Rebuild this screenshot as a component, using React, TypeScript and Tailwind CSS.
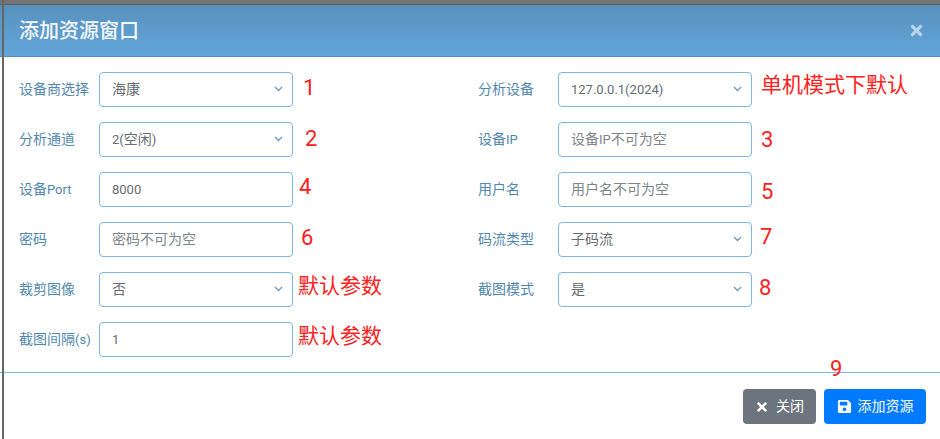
import { FaSave, FaTimes } from 'react-icons/fa';

const cjk = "font-['Roboto','Noto_Sans_CJK_SC',sans-serif]";

interface FieldRow {
  label: string;
  value?: string;
  placeholder?: string;
  select?: boolean;
  note?: string;
  noteClass?: string;
}

const rows: [FieldRow, FieldRow | null][] = [
  [
    { label: '设备商选择', value: '海康', select: true, note: '1', noteClass: 'ml-[10px] text-[22px] -translate-y-[2px]' },
    { label: '分析设备', value: '127.0.0.1(2024)', select: true, note: '单机模式下默认', noteClass: 'ml-[9px] text-[21px] -translate-y-[4px]' },
  ],
  [
    { label: '分析通道', value: '2(空闲)', select: true, note: '2', noteClass: 'ml-[12px] text-[22px] -translate-y-[1px]' },
    { label: '设备IP', placeholder: '设备IP不可为空', note: '3', noteClass: 'ml-[9px] text-[22px]' },
  ],
  [
    { label: '设备Port', value: '8000', note: '4', noteClass: 'ml-[6px] text-[22px] -translate-y-[3px]' },
    { label: '用户名', placeholder: '用户名不可为空', note: '5', noteClass: 'ml-[9px] text-[22px] translate-y-[2px]' },
  ],
  [
    { label: '密码', placeholder: '密码不可为空', note: '6', noteClass: 'ml-[8px] text-[22px] -translate-y-[2px]' },
    { label: '码流类型', value: '子码流', select: true, note: '7', noteClass: 'ml-[8px] text-[22px] -translate-y-[3px]' },
  ],
  [
    { label: '裁剪图像', value: '否', select: true, note: '默认参数', noteClass: 'ml-[5px] text-[21px] -translate-y-[3px]' },
    { label: '截图模式', value: '是', select: true, note: '8', noteClass: 'ml-[7px] text-[22px] -translate-y-[2px]' },
  ],
  [
    { label: '截图间隔(s)', value: '1', note: '默认参数', noteClass: 'ml-[5px] text-[21px] -translate-y-[3px]' },
    null,
  ],
];

// latin runs sit a size down next to the 14px chinese, their digits are narrow in the original font
function Mixed({ text }: { text: string }) {
  return (
    <>
      {text.split(/([\x00-\x7f]+)/).map((part, i) =>
        /^[\x00-\x7f]+$/.test(part) ? (
          <span key={i} className="text-[13px]">{part}</span>
        ) : (
          part
        )
      )}
    </>
  );
}

function Field({ row }: { row: FieldRow }) {
  return (
    <div className="flex items-center h-[35px]">
      <label className="w-[80px] shrink-0 text-[14px] text-[#5288ae]">
        <Mixed text={row.label} />
      </label>
      <div className="w-[194px] h-[35px] shrink-0 flex items-center justify-between pl-[12px] pr-[9px] bg-white border border-[#7db8e3] rounded-[4px] text-[14px]">
        <span className={row.placeholder ? 'text-[#80858a]' : 'text-[#666c72]'}>
          <Mixed text={row.value ?? row.placeholder ?? ''} />
        </span>
        {row.select && (
          <svg width="9" height="6" viewBox="0 0 9 6" fill="none" className="shrink-0 -translate-y-[1px]">
            <path d="M1 1 4.5 4.5 8 1" stroke="#6f9cc2" strokeWidth="1.4" />
          </svg>
        )}
      </div>
      {row.note && <span className={`text-[#ff2020] leading-none whitespace-nowrap ${row.noteClass}`}>{row.note}</span>}
    </div>
  );
}

export default function App() {
  return (
    <div className={`relative w-[940px] h-[439px] overflow-hidden bg-white flex flex-col ${cjk}`}>
      <div className="h-[5px] shrink-0 bg-[#757575] border-b border-[#5f5f5f]" />

      {/* Header */}
      <div className="h-[52px] shrink-0 flex items-center justify-between pl-[19px] pr-[15px] bg-gradient-to-b from-[#5892bf] to-[#62a5d8] border-b border-[#4a8fbd]">
        <h4 className="text-[20px] font-medium text-[#f4f8fb]">添加资源窗口</h4>
        <FaTimes className="text-[#b9d5ea] text-[17px]" />
      </div>

      {/* Form */}
      <div className="h-[315px] shrink-0 pt-[15px] pl-[19px] flex flex-col gap-[15px]">
        {rows.map((pair, i) => (
          <div key={i} className="grid grid-cols-[459px_1fr]">
            <Field row={pair[0]} />
            {pair[1] && <Field row={pair[1]} />}
          </div>
        ))}
      </div>

      {/* Footer */}
      <div className="relative flex-1 flex justify-end gap-[8px] pt-[16px] pr-[14px] border-t border-[#7db8e3]">
        <span className="absolute left-[830px] -top-[15px] text-[22px] leading-none text-[#ff2020]">9</span>
        <button className="w-[73px] h-[35px] flex items-center justify-center gap-[7px] rounded-[4px] bg-[#6c757d] text-white text-[14px]">
          <FaTimes className="text-[14px]" />
          关闭
        </button>
        <button className="w-[102px] h-[35px] flex items-center justify-center gap-[6px] rounded-[4px] bg-[#007bff] text-white text-[14px]">
          <FaSave className="text-[15px]" />
          添加资源
        </button>
      </div>

      {/* window edge showing through on the left */}
      <div className="absolute left-[2px] top-0 bottom-0 w-[2px] bg-[#666666]" />
    </div>
  );
}
